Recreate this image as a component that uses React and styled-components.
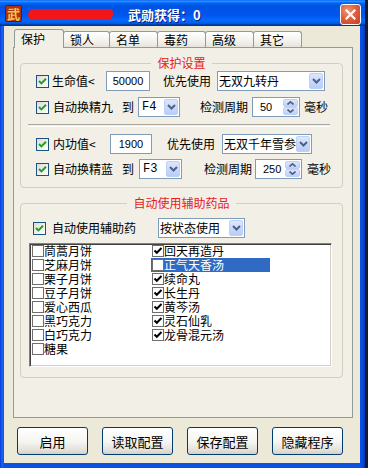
import styled, { createGlobalStyle } from "styled-components";

const GlobalStyle = createGlobalStyle`
  html, body { margin: 0; padding: 0; }
  body {
    background: #151d2c;
    font-family: "Noto Sans CJK SC", "Noto Sans", sans-serif;
    font-size: 12px;
    color: #000;
  }
`;

const Window = styled.div`
  width: 365px;
  height: 468px;
  display: flex;
  flex-direction: column;
  background: linear-gradient(to right, #0838d8, #1a66f0 2px, #0b52e3 4px, #0b52e3 360px, #0a4ad8 363px, #0630b8);
`;

const TitleBar = styled.div`
  height: 26px;
  flex: none;
  display: flex;
  align-items: center;
  padding: 0 4px 0 5px;
  background: linear-gradient(to bottom, #0058ee 0%, #3593ff 4%, #288eff 6%, #127dff 8%, #036ffc 10%, #0262ee 14%, #0057e5 20%, #0054e3 24%, #0055eb 56%, #005bf5 66%, #026afe 76%, #0062ef 86%, #0052d6 92%, #0040ab 94%, #003092 100%);
`;

const Scribble = styled.span`
  width: 85px;
  height: 11px;
  margin: 2px 0 0 6px;
  border-radius: 6px 4px 6px 5px;
  background: #f2161a;
  filter: blur(0.6px);
`;

const Title = styled.span`
  margin-left: 15px;
  margin-top: 2px;
  color: #fff;
  font-weight: bold;
  font-size: 13px;
  text-shadow: 1px 1px 0 #0a1d8a;
  white-space: nowrap;
`;

const CloseButton = styled.div`
  box-sizing: border-box;
  width: 21px;
  height: 21px;
  margin-left: auto;
  margin-top: 3px;
  border: 1px solid #fff;
  border-radius: 3px;
  background: radial-gradient(circle at 35% 30%, #f0957a, #e0603f 45%, #c4401f);
  display: flex;
  align-items: center;
  justify-content: center;
`;

const Client = styled.div`
  flex: 1;
  margin: 0 5px 5px 4px;
  background: #ece9d8;
  padding: 3px 0 0 9px;
  display: flex;
  flex-direction: column;
`;

const TabStrip = styled.div`
  display: flex;
  align-items: flex-end;
  height: 18px;
  padding-left: 1px;
`;

const Tab = styled.div`
  box-sizing: border-box;
  width: ${p => p.$w}px;
  height: ${p => (p.$active ? 19 : 16)}px;
  margin-bottom: ${p => (p.$active ? -1 : 0)}px;
  border: 1px solid #919b9c;
  border-bottom: none;
  border-radius: 3px 3px 0 0;
  background: ${p => (p.$active ? "#f1efe6" : "linear-gradient(#ffffff, #f3f2ec 60%, #e6e4dc)")};
  padding-left: 6px;
  line-height: ${p => (p.$active ? 17 : 15)}px;
  position: relative;
  z-index: ${p => (p.$active ? 2 : 1)};
  white-space: nowrap;
  & + & { margin-left: -1px; }
`;

const Panel = styled.div`
  box-sizing: border-box;
  width: 340px;
  height: 371px;
  border: 1px solid #919b9c;
  background: #f1efe6;
  padding-top: 8px;
`;

const Group = styled.fieldset`
  box-sizing: border-box;
  width: 323px;
  min-width: 0;
  margin: ${p => p.$mt}px 0 0 6px;
  padding: ${p => p.$pt}px 0 ${p => p.$pb}px 0;
  border: 1px solid #d0d0bf;
  border-radius: 4px;
`;

const Legend = styled.legend`
  margin: 0 auto;
  padding: 0 6px;
  color: #e8201a;
  font-size: 12px;
  line-height: 14px;
`;

const Row = styled.div`
  display: flex;
  align-items: center;
  height: 20px;
  margin-top: ${p => p.$mt || 0}px;
`;

const Separator = styled.div`
  height: 1px;
  margin: 7px 12px 0 7px;
  border-top: 1px solid #aca899;
  border-bottom: 1px solid #ffffff;
`;

const XpCheck = styled.span`
  box-sizing: border-box;
  flex: none;
  width: 13px;
  height: 13px;
  margin-left: ${p => p.$ml || 0}px;
  border: 1px solid #1c5180;
  background: linear-gradient(135deg, #dcdcd7, #ffffff);
  display: flex;
  align-items: center;
  justify-content: center;
`;

const Text = styled.span`
  flex: none;
  width: ${p => p.$w}px;
  margin-left: ${p => p.$ml || 0}px;
  line-height: 20px;
  white-space: nowrap;
`;

const Edit = styled.div`
  box-sizing: border-box;
  flex: none;
  width: ${p => p.$w}px;
  height: 20px;
  margin-left: ${p => p.$ml || 0}px;
  border: 1px solid #7f9db9;
  background: #fff;
  font-family: "Liberation Sans", Arial, sans-serif;
  font-size: 11px;
  line-height: 18px;
  text-align: center;
`;

const Combo = styled.div`
  box-sizing: border-box;
  flex: none;
  width: ${p => p.$w}px;
  height: 20px;
  margin-left: ${p => p.$ml || 0}px;
  border: 1px solid #7f9db9;
  background: #fff;
  display: flex;
  align-items: stretch;
  padding: 1px;
`;

const ComboText = styled.span`
  flex: 1;
  min-width: 0;
  overflow: hidden;
  white-space: nowrap;
  padding-left: ${p => (p.$mono ? 2 : 0)}px;
  line-height: 16px;
  font-family: ${p => (p.$mono ? '"Liberation Mono", "Courier New", monospace' : 'inherit')};
`;

const DropButton = styled.span`
  box-sizing: border-box;
  flex: none;
  width: 14px;
  border: 1px solid #bcd0f8;
  border-radius: 2px;
  background: linear-gradient(#dce6fd, #b9cdf8);
  display: flex;
  align-items: center;
  justify-content: center;
`;

const Spin = styled(Combo)`
  font-family: "Liberation Sans", Arial, sans-serif;
  font-size: 11px;
`;

const SpinText = styled.span`
  flex: 1;
  padding-left: 6px;
  line-height: 16px;
`;

const UpDown = styled.span`
  flex: none;
  width: 15px;
  display: flex;
  flex-direction: column;
`;

const SpinHalf = styled.span`
  box-sizing: border-box;
  flex: 1;
  border: 1px solid #bcd0f8;
  border-radius: 2px;
  background: linear-gradient(#dce6fd, #bed0f8);
  display: flex;
  align-items: center;
  justify-content: center;
`;

const ListBox = styled.div`
  box-sizing: border-box;
  width: 303px;
  height: 124px;
  margin: 5px 0 0 8px;
  background: #fff;
  border: 1px solid;
  border-color: #808080 #ffffff #ffffff #808080;
  box-shadow: inset 1px 1px 0 #404040, inset -1px -1px 0 #d4d0c8;
  padding: 0 1px;
  display: grid;
  grid-auto-flow: column;
  grid-template-rows: repeat(8, 14px);
  grid-template-columns: 119px 119px;
  column-gap: 1px;
  align-content: start;
`;

const ListItem = styled.div`
  display: flex;
  align-items: center;
  height: 14px;
  padding-left: 1px;
  white-space: nowrap;
  background: ${p => (p.$selected ? "#316ac5" : "transparent")};
  color: ${p => (p.$selected ? "#fff" : "#000")};
`;

const ItemLabel = styled.span`
  display: block;
  height: 14px;
  line-height: 14px;
`;

const ListCheck = styled.span`
  box-sizing: border-box;
  flex: none;
  width: 12px;
  height: 12px;
  border: 1px solid #6e6e6e;
  background: #fff;
  display: flex;
  align-items: center;
  justify-content: center;
`;

const ButtonBar = styled.div`
  display: flex;
  gap: 14px;
  margin-top: 9px;
  padding-left: 4px;
`;

const Button = styled.button`
  box-sizing: border-box;
  width: 71px;
  height: 28px;
  padding: 0;
  border: 1px solid #003c74;
  border-radius: 3px;
  background: linear-gradient(#ffffff, #f4f4f0 55%, #e3e1d8 85%, #d6d0c5);
  font-family: "Noto Sans CJK SC", sans-serif;
  font-size: 13px;
  color: #000;
`;

const AppIcon = () => (
  <svg width="17" height="17" viewBox="0 0 17 17">
    <rect x="0.5" y="0.5" width="16" height="16" rx="1" fill="#a8321a" stroke="#5a1a0a" />
    <text x="8.5" y="13.5" textAnchor="middle" fontSize="13" fontWeight="bold" fill="#ffc640" fontFamily="Noto Sans CJK SC">武</text>
  </svg>
);

const CloseX = () => (
  <svg width="11" height="11" viewBox="0 0 11 11">
    <path d="M1.5 1.5 L9.5 9.5 M9.5 1.5 L1.5 9.5" stroke="#fff" strokeWidth="2.2" strokeLinecap="square" />
  </svg>
);

const GreenTick = () => (
  <svg width="9" height="9" viewBox="0 0 9 9">
    <path d="M1 4 L3.4 6.4 L8 1.8" fill="none" stroke="#21a121" strokeWidth="2" />
  </svg>
);

const BlackTick = () => (
  <svg width="10" height="10" viewBox="0 0 10 10">
    <path d="M1.5 4.5 L3.8 6.8 L8.5 2" fill="none" stroke="#000" strokeWidth="2" />
  </svg>
);

const Chevron = ({ up }) => (
  <svg width="7" height="4" viewBox="0 0 7 4">
    <path d={up ? "M0.5 3.5 L3.5 0.8 L6.5 3.5" : "M0.5 0.5 L3.5 3.2 L6.5 0.5"} fill="none" stroke="#4d6185" strokeWidth="1.6" />
  </svg>
);

const DropDown = ({ w, ml, mono, children }) => (
  <Combo $w={w} $ml={ml}>
    <ComboText $mono={mono}>{children}</ComboText>
    <DropButton>
      <svg width="9" height="6" viewBox="0 0 9 6">
        <path d="M1 1 L4.5 4.5 L8 1" fill="none" stroke="#4d6185" strokeWidth="2" />
      </svg>
    </DropButton>
  </Combo>
);

const SpinBox = ({ w, ml, children }) => (
  <Spin $w={w} $ml={ml}>
    <SpinText>{children}</SpinText>
    <UpDown>
      <SpinHalf><Chevron up /></SpinHalf>
      <SpinHalf><Chevron /></SpinHalf>
    </UpDown>
  </Spin>
);

const tabs = [
  { label: "保护", w: 50 },
  { label: "锁人", w: 47 },
  { label: "名单", w: 49 },
  { label: "毒药", w: 49 },
  { label: "高级", w: 49 },
  { label: "其它", w: 49 },
];

const medicines = [
  { name: "茼蒿月饼", on: false },
  { name: "芝麻月饼", on: false },
  { name: "栗子月饼", on: false },
  { name: "豆子月饼", on: false },
  { name: "爱心西瓜", on: false },
  { name: "黑巧克力", on: false },
  { name: "白巧克力", on: false },
  { name: "糖果", on: false },
  { name: "回天再造丹", on: true },
  { name: "正气天香汤", on: false, selected: true },
  { name: "续命丸", on: true },
  { name: "长生丹", on: true },
  { name: "黄芩汤", on: true },
  { name: "灵石仙乳", on: true },
  { name: "龙骨混元汤", on: true },
];

export default function App() {
  return (
    <>
      <GlobalStyle />
      <Window>
        <TitleBar>
          <AppIcon />
          <Scribble />
          <Title>武勋获得：0</Title>
          <CloseButton><CloseX /></CloseButton>
        </TitleBar>
        <Client>
          <TabStrip>
            {tabs.map((t, i) => (
              <Tab key={t.label} $w={t.w} $active={i === 0}>{t.label}</Tab>
            ))}
          </TabStrip>
          <Panel>
            <Group $mt={0} $pt={1} $pb={8}>
              <Legend>保护设置</Legend>
              <Row>
                <XpCheck $ml={15}><GreenTick /></XpCheck>
                <Text $w={50} $ml={3}>生命值&lt;</Text>
                <Edit $w={44} $ml={4}>50000</Edit>
                <Text $w={48} $ml={13}>优先使用</Text>
                <DropDown w={108} ml={6}>无双九转丹</DropDown>
              </Row>
              <Row $mt={6}>
                <XpCheck $ml={15}><GreenTick /></XpCheck>
                <Text $w={62} $ml={4}>自动换精九</Text>
                <Text $w={12} $ml={7}>到</Text>
                <DropDown w={42} ml={4} mono>F4</DropDown>
                <Text $w={48} $ml={20}>检测周期</Text>
                <SpinBox w={48} ml={4}>50</SpinBox>
                <Text $w={24} $ml={4}>毫秒</Text>
              </Row>
              <Separator />
              <Row $mt={7}>
                <XpCheck $ml={15}><GreenTick /></XpCheck>
                <Text $w={50} $ml={4}>内功值&lt;</Text>
                <Edit $w={42} $ml={7}>1900</Edit>
                <Text $w={48} $ml={15}>优先使用</Text>
                <DropDown w={90} ml={7}>无双千年雪参</DropDown>
              </Row>
              <Row $mt={5}>
                <XpCheck $ml={15}><GreenTick /></XpCheck>
                <Text $w={62} $ml={4}>自动换精蓝</Text>
                <Text $w={12} $ml={7}>到</Text>
                <DropDown w={43} ml={5} mono>F3</DropDown>
                <Text $w={48} $ml={22}>检测周期</Text>
                <SpinBox w={47} ml={3}>250</SpinBox>
                <Text $w={24} $ml={5}>毫秒</Text>
              </Row>
            </Group>
            <Group $mt={8} $pt={8} $pb={10}>
              <Legend>自动使用辅助药品</Legend>
              <Row>
                <XpCheck $ml={12}><GreenTick /></XpCheck>
                <Text $w={84} $ml={6}>自动使用辅助药</Text>
                <DropDown w={87} ml={22}>按状态使用</DropDown>
              </Row>
              <ListBox>
                {medicines.map(m => (
                  <ListItem key={m.name} $selected={m.selected}>
                    <ListCheck>{m.on && <BlackTick />}</ListCheck>
                    <ItemLabel>{m.name}</ItemLabel>
                  </ListItem>
                ))}
              </ListBox>
            </Group>
          </Panel>
          <ButtonBar>
            <Button>启用</Button>
            <Button>读取配置</Button>
            <Button>保存配置</Button>
            <Button>隐藏程序</Button>
          </ButtonBar>
        </Client>
      </Window>
    </>
  );
}
